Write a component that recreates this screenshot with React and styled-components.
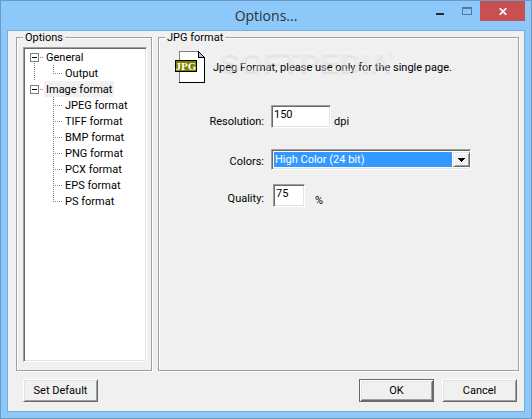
import { useState } from "react";
import styled, { createGlobalStyle } from "styled-components";

const tree = [
    { id: "general", name: "General", items: ["Output"] },
    {
        id: "image",
        name: "Image format",
        items: ["JPEG format", "TIFF format", "BMP format", "PNG format", "PCX format", "EPS format", "PS format"],
    },
];

export default function App() {
    const [selected, setSelected] = useState("Image format");
    const [resolution, setResolution] = useState("150");
    const [colors, setColors] = useState("24");
    const [quality, setQuality] = useState("75");

    return (
        <>
            <GlobalStyle />
            <SCWindow>
                <SCTitleBar>
                    <SCTitle>Options...</SCTitle>
                    <SCControls>
                        <SCControl aria-label="Minimize">
                            <svg width="10" height="8" shapeRendering="crispEdges">
                                <rect y="6" width="8" height="2" fill="#1c2b38" />
                            </svg>
                        </SCControl>
                        <SCControl aria-label="Maximize" disabled>
                            <svg width="10" height="8" shapeRendering="crispEdges">
                                <path d="M0 0h10v8H0z M1 2v5h8V2z" fill="#587a99" fillRule="evenodd" />
                            </svg>
                        </SCControl>
                        <SCClose aria-label="Close">
                            <svg width="8" height="7" viewBox="0 0 8 7">
                                <path d="M0.7 0.2l6.6 6.6M7.3 0.2L0.7 6.8" stroke="#fff" strokeWidth="1.7" />
                            </svg>
                        </SCClose>
                    </SCControls>
                </SCTitleBar>

                <SCClient>
                    <SCPanels>
                        <SCGroup>
                            <SCLegend>Options</SCLegend>
                            <SCTree>
                                {tree.map((branch, i) => (
                                    <SCBranch key={branch.id} $last={i === tree.length - 1}>
                                        <SCBranchRow>
                                            <SCToggle aria-label={`Collapse ${branch.name}`} />
                                            <SCDots />
                                            <SCNode
                                                $active={selected === branch.name}
                                                onClick={() => setSelected(branch.name)}
                                            >
                                                {branch.name}
                                            </SCNode>
                                        </SCBranchRow>
                                        <SCLeaves>
                                            {branch.items.map((item) => (
                                                <SCLeaf key={item}>
                                                    <SCNode
                                                        $active={selected === item}
                                                        onClick={() => setSelected(item)}
                                                    >
                                                        {item}
                                                    </SCNode>
                                                </SCLeaf>
                                            ))}
                                        </SCLeaves>
                                    </SCBranch>
                                ))}
                            </SCTree>
                        </SCGroup>

                        <SCGroup>
                            <SCLegend>JPG format</SCLegend>
                            <SCIntro>
                                <JpgIcon />
                                <SCNote>
                                    Jpeg Format, please use only for the single page.
                                    <SCWatermark aria-hidden="true">
                                        SOFTPEDIA<sup>®</sup>
                                    </SCWatermark>
                                </SCNote>
                            </SCIntro>
                            <SCForm>
                                <SCRow>
                                    <SCLabel htmlFor="resolution">Resolution:</SCLabel>
                                    <SCInput
                                        id="resolution"
                                        $width={60}
                                        value={resolution}
                                        onChange={(e) => setResolution(e.target.value)}
                                    />
                                    <SCUnit>dpi</SCUnit>
                                </SCRow>
                                <SCRow $raised>
                                    <SCLabel htmlFor="colors">Colors:</SCLabel>
                                    <SCCombo>
                                        <SCSelect
                                            id="colors"
                                            value={colors}
                                            onChange={(e) => setColors(e.target.value)}
                                        >
                                            <option value="24">High Color (24 bit)</option>
                                        </SCSelect>
                                        <SCArrow>
                                            <svg width="7" height="4" shapeRendering="crispEdges">
                                                <path d="M0 0h7v1H6v1H5v1H4v1H3V3H2V2H1V1H0z" />
                                            </svg>
                                        </SCArrow>
                                    </SCCombo>
                                </SCRow>
                                <SCRow $raised $close>
                                    <SCLabel htmlFor="quality">Quality:</SCLabel>
                                    <SCInput
                                        id="quality"
                                        $width={32}
                                        $inset={2}
                                        value={quality}
                                        onChange={(e) => setQuality(e.target.value)}
                                    />
                                    <SCUnit $gap={10}>%</SCUnit>
                                </SCRow>
                            </SCForm>
                        </SCGroup>
                    </SCPanels>

                    <SCFooter>
                        <SCButton>Set Default</SCButton>
                        <SCFooterRight>
                            <SCButton $primary>OK</SCButton>
                            <SCButton>Cancel</SCButton>
                        </SCFooterRight>
                    </SCFooter>
                </SCClient>
            </SCWindow>
        </>
    );
}

function JpgIcon() {
    return (
        <SCIcon width="31" height="33" viewBox="0 0 31 33" shapeRendering="crispEdges">
            <path d="M4 0h20l6 6v26H4z" fill="#fff" />
            <path d="M4 0h20v1H5v30H4z" fill="#808080" />
            <path d="M4 31h25V6h1v26H4z" fill="#000" />
            <path d="M23 0h1v1h1v1h1v1h1v1h1v1h1v1h1v1h-7z" fill="#000" />
            <path d="M24 2h1v1h1v1h1v1h1v1h-4z" fill="#c0c0c0" />
            <rect x="0" y="9" width="22" height="12" fill="#000" />
            <rect x="1" y="10" width="20" height="10" fill="#808000" />
            <text
                x="11"
                y="19"
                textAnchor="middle"
                fill="#fff"
                fontFamily="'Liberation Serif', 'Times New Roman', serif"
                fontSize="11"
                fontWeight="700"
            >
                JPG
            </text>
        </SCIcon>
    );
}

const GlobalStyle = createGlobalStyle`
    *{
        box-sizing: border-box;
    }

    body{
        margin: 0;

        font-family: Roboto, 'Liberation Sans', Arial, sans-serif;
        font-size: 11px;
        line-height: 13px;

        color: #000;
    }

    button, input, select{
        margin: 0;
        padding: 0;

        font: inherit;
        color: inherit;
    }
`

const SCWindow = styled.div`
    min-height: 100vh;

    display: flex;
    flex-direction: column;

    padding: 0 6px 6px;

    border: 1px solid #6a9ac4;

    background-color: #8dc8fb;
`

const SCTitleBar = styled.header`
    height: 29px;

    display: grid;
    grid-template-columns: 1fr auto 1fr;
`

const SCTitle = styled.h1`
    margin: 0;

    grid-column: 2;

    font-family: 'Open Sans', 'Noto Sans', sans-serif;
    font-size: 14px;
    font-weight: 400;
    line-height: 29px;

    color: #2a3138;
`

const SCControls = styled.div`
    display: flex;
    justify-content: flex-end;
    align-items: flex-start;
`

const SCControl = styled.button`
    width: 26px;
    height: 20px;

    display: flex;
    align-items: center;
    justify-content: center;

    border: none;

    background: none;
`

const SCClose = styled(SCControl)`
    width: 45px;

    background-color: #c75050;
`

const SCClient = styled.main`
    flex: 1;

    display: flex;
    flex-direction: column;

    padding: 0 5px 9px 8px;

    border: 1px solid #73aede;

    background-color: #f0f0f0;
`

const SCPanels = styled.div`
    flex: 1;

    display: grid;
    grid-template-columns: 136px 1fr;
    gap: 6px;
`

const SCGroup = styled.fieldset`
    min-width: 0;

    margin: 0;
    padding: 3px 4px 8px 6px;

    display: flex;
    flex-direction: column;

    border: 1px solid #a0a0a0;
    box-shadow: 1px 1px 0 #fff, inset 1px 1px 0 #fff;
`

const SCLegend = styled.legend`
    padding: 0 2px;

    background-color: #f0f0f0;
`

const SCTree = styled.ul`
    flex: 1;

    margin: 0;
    padding: 1px 5px;

    list-style: none;

    border: 1px solid;
    border-color: #a0a0a0 #fff #fff #a0a0a0;
    box-shadow: inset 1px 1px 0 #696969, inset -1px -1px 0 #e3e3e3;

    background-color: #fff;
`

const SCBranch = styled.li`
    padding-left: 1px;

    background: ${props => props.$last ? 'none' : 'repeating-linear-gradient(#808080 0 1px, transparent 1px 2px) 5px 8px / 1px 100% no-repeat'};
`

const SCBranchRow = styled.div`
    height: 16px;

    display: flex;
    align-items: center;
`

const SCToggle = styled.button`
    width: 9px;
    height: 9px;

    border: 1px solid #808080;

    background: linear-gradient(#000, #000) center / 5px 1px no-repeat #fff;
`

const SCDots = styled.span`
    width: 5px;
    height: 1px;

    background: repeating-linear-gradient(90deg, transparent 0 1px, #808080 1px 2px);
`

const SCNode = styled.button`
    height: 16px;

    padding: 0 2px;

    border: none;

    background-color: ${props => props.$active ? '#f0f0f0' : 'transparent'};

    white-space: nowrap;
`

const SCLeaves = styled.ul`
    margin: 0;
    padding: 0 0 0 23px;

    list-style: none;
`

const SCLeaf = styled.li`
    height: 16px;

    display: flex;

    padding-left: 10px;

    background:
        repeating-linear-gradient(#808080 0 1px, transparent 1px 2px) 0 0 / 1px 16px no-repeat,
        repeating-linear-gradient(90deg, #808080 0 1px, transparent 1px 2px) 0 8px / 10px 1px no-repeat;

    &:last-child{
        background-size: 1px 9px, 10px 1px;
    }
`

const SCIntro = styled.div`
    display: flex;
    align-items: center;

    gap: 7px;

    padding: 4px 0 0 10px;
`

const SCIcon = styled.svg`
    flex: none;
`

const SCNote = styled.p`
    margin: 0;

    position: relative;

    white-space: nowrap;
`

// faint embossed brand laid over the note
const SCWatermark = styled.span`
    position: absolute;
    top: -15px;
    left: 7px;

    font-family: 'Liberation Sans', Arial, sans-serif;
    font-size: 30px;
    font-weight: 700;
    line-height: 32px;

    color: rgba(252, 252, 252, 0.4);
    text-shadow: 0 2px 2px rgba(0, 0, 0, 0.07);

    pointer-events: none;

    sup{
        margin-left: -4px;

        font-size: 9px;
        line-height: 9px;
        vertical-align: 15px;
    }
`

const SCForm = styled.form`
    display: flex;
    flex-direction: column;

    margin-top: 21px;
`

const SCRow = styled.div`
    display: flex;
    align-items: flex-end;

    margin-top: ${props => props.$close ? 14 : props.$raised ? 21 : 0}px;

    label{
        padding-bottom: ${props => props.$raised ? 2 : 0}px;
    }
`

const SCLabel = styled.label`
    width: 99px;

    margin-right: 7px;

    text-align: right;
`

const SCInput = styled.input`
    width: ${props => props.$width}px;
    height: 23px;

    margin-left: ${props => props.$inset || 0}px;
    padding: 0 2px 4px;

    border: 1px solid;
    border-color: #a0a0a0 #fff #fff #a0a0a0;
    border-radius: 0;
    box-shadow: inset 1px 1px 0 #696969, inset -1px -1px 0 #e3e3e3;
    outline: none;

    background-color: #fff;
`

const SCUnit = styled.span`
    margin-left: ${props => props.$gap || 3}px;
`

const SCCombo = styled.div`
    flex: 0 1 200px;

    height: 21px;

    display: flex;

    padding: 2px 0 2px 2px;

    border: 1px solid;
    border-color: #a0a0a0 #fff #fff #a0a0a0;
    box-shadow: inset 1px 1px 0 #696969, inset -1px -1px 0 #e3e3e3;

    background-color: #fff;
`

const SCSelect = styled.select`
    flex: 1;

    min-width: 0;

    padding-left: 1px;

    appearance: none;
    border: none;
    border-radius: 0;
    outline: none;

    background-color: #3399ff;

    color: #fff;
`

const SCArrow = styled.span`
    width: 17px;

    margin-left: 1px;

    display: flex;
    align-items: center;
    justify-content: center;

    border: 1px solid;
    border-color: #e3e3e3 #696969 #696969 #e3e3e3;
    box-shadow: inset 1px 1px 0 #fff, inset -1px -1px 0 #a0a0a0;

    background-color: #f0f0f0;

    pointer-events: none;
`

const SCFooter = styled.footer`
    display: flex;
    justify-content: space-between;

    margin-top: 8px;
    padding: 0 2px 0 7px;
`

const SCFooterRight = styled.div`
    display: flex;

    gap: 8px;
`

const SCButton = styled.button`
    width: 75px;
    height: 23px;

    border: 1px solid;
    border-color: ${props => props.$primary ? '#696969' : '#fff #696969 #696969 #fff'};
    box-shadow: ${props => props.$primary
        ? 'inset 1px 1px 0 #fff, inset -1px -1px 0 #696969, inset 2px 2px 0 #e3e3e3, inset -2px -2px 0 #a0a0a0'
        : 'inset 1px 1px 0 #e3e3e3, inset -1px -1px 0 #a0a0a0'};

    background-color: #f0f0f0;
`
